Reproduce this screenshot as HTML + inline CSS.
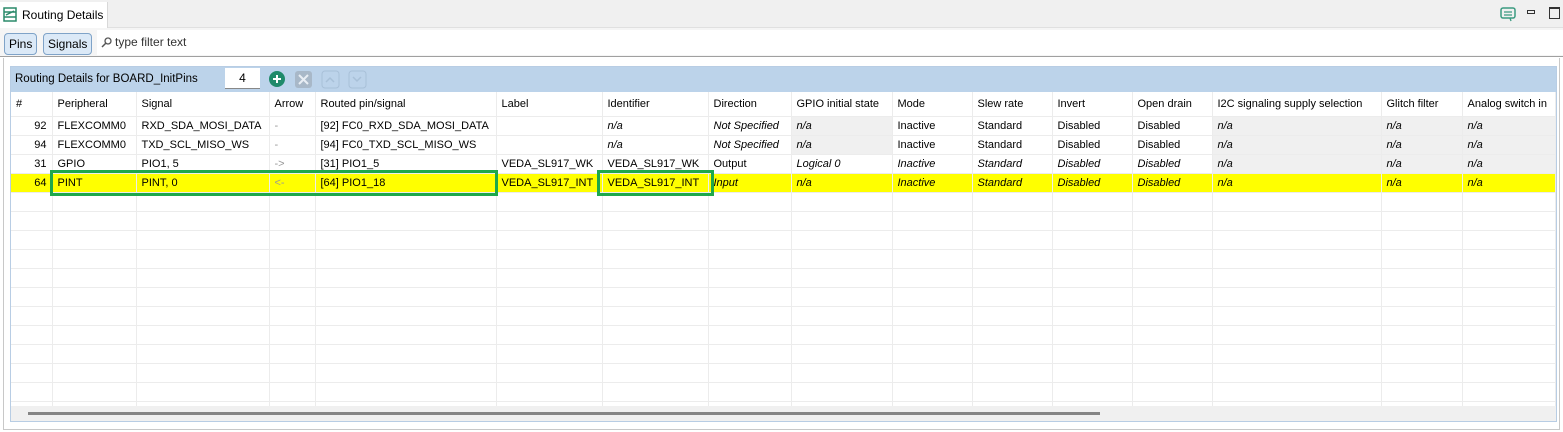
<!DOCTYPE html>
<html><head><meta charset="utf-8">
<style>
*{margin:0;padding:0;box-sizing:border-box}
body{width:1563px;height:432px;background:#fff;font-family:"Liberation Sans",sans-serif;font-size:12px;color:#000;position:relative;overflow:hidden}
.abs{position:absolute}
.tabbar{left:0;top:0;width:1563px;height:28px;background:#f0f0f0;border-bottom:1px solid #e0e0e0}
.tab{left:0;top:2px;width:108px;height:26px;background:#fff;border-right:1px solid #d8d8d8}
.toolbar{left:0;top:28px;width:1563px;height:29px;background:#f5f5f5;border-bottom:1px solid #a0a0a0}
.btn{top:33px;height:22px;background:#dbe9f7;border:1px solid #7fa3c8;border-radius:4px;padding:3px 4px;font-size:12px}
.filter{left:97px;top:30px;width:1466px;height:25px;background:#fff}
.panel{left:3px;top:58px;width:1557px;height:372px;border:1px solid #c8c8c8;border-top:none}
.inner{left:10px;top:66px;width:1547px;height:356px;border:1px solid #b8cde4}
.blue{left:11px;top:67px;width:1545px;height:25px;background:#bcd3ea}
table{position:absolute;left:11px;top:92px;border-collapse:collapse;table-layout:fixed;width:1544px}
td{height:19px;border-right:1px solid #ececec;border-bottom:1px solid #ececec;padding:1px 5px 0;white-space:nowrap;overflow:hidden;font-size:11px}
tr.h td{height:24px;border-bottom:1px solid #ececec}
.r{text-align:right}
.i{font-style:italic}
.g{background:#f0f0f0}
.y td{background:#ffff00}
.gr{color:#999}
.box{position:absolute;border:3px solid #1ea84b}
</style></head><body>
<div class="abs tabbar"></div>
<div class="abs tab"></div>
<svg class="abs" style="left:3px;top:7px" width="14" height="15" viewBox="0 0 14 15"><rect x="1" y="1" width="12" height="13" fill="none" stroke="#2a8a6a" stroke-width="1.5"/><path d="M1 5h12M1 10h12M3 8l8-4" stroke="#2a8a6a" stroke-width="1.5" fill="none"/></svg>
<div class="abs" style="left:22px;top:8px;font-size:12px">Routing Details</div>
<svg class="abs" style="left:1500px;top:7px" width="16" height="15"><rect x="1" y="1" width="14" height="10" rx="2" fill="none" stroke="#3a9a80" stroke-width="1.5"/><path d="M4 5h8M4 8h8M10 11l1 3" stroke="#3a9a80" stroke-width="1.3"/></svg>
<div class="abs" style="left:1527px;top:10px;width:8px;height:4px;border:1px solid #333"></div>
<div class="abs" style="left:1549px;top:7px;width:11px;height:12px;border:1px solid #333;border-top:2px solid #333"></div>
<div class="abs toolbar"></div>
<div class="abs filter"></div>
<div class="abs btn" style="left:4px">Pins</div>
<div class="abs btn" style="left:43px">Signals</div>
<svg class="abs" style="left:101px;top:37px" width="11" height="11"><circle cx="7" cy="4" r="3" fill="none" stroke="#555" stroke-width="1.3"/><path d="M5 6L1 10" stroke="#555" stroke-width="1.5"/></svg>
<div class="abs" style="left:115px;top:35px;color:#333">type filter text</div>
<div class="abs panel"></div>
<div class="abs inner"></div>
<div class="abs blue"></div>
<div class="abs" style="left:15px;top:73px;font-size:11.5px">Routing Details for BOARD_InitPins</div>
<div class="abs" style="left:225px;top:68px;width:35px;height:21px;background:#fff;border-bottom:1px solid #888;text-align:center;padding-top:3px">4</div>
<svg class="abs" style="left:268px;top:70px" width="102" height="19"><circle cx="9" cy="9" r="8" fill="#1f8a6a"/><path d="M9 5v8M5 9h8" stroke="#fff" stroke-width="2"/><rect x="27" y="1" width="17" height="17" rx="3" fill="#a8b8c8"/><path d="M31 5l9 9M40 5l-9 9" stroke="#e8eef4" stroke-width="2"/><rect x="54" y="1" width="17" height="17" rx="3" fill="none" stroke="#a8c0d8"/><path d="M58 12l4-4 4 4" stroke="#a8c0d8" stroke-width="1.5" fill="none"/><rect x="81" y="1" width="17" height="17" rx="3" fill="none" stroke="#a8c0d8"/><path d="M85 7l4 4 4-4" stroke="#a8c0d8" stroke-width="1.5" fill="none"/></svg>
<table>
<colgroup><col style="width:41px"><col style="width:84px"><col style="width:133px"><col style="width:46px"><col style="width:181px"><col style="width:106px"><col style="width:106px"><col style="width:83px"><col style="width:101px"><col style="width:80px"><col style="width:80px"><col style="width:80px"><col style="width:80px"><col style="width:169px"><col style="width:81px"><col style="width:93px"></colgroup>
<tr class="h"><td>#</td><td>Peripheral</td><td>Signal</td><td>Arrow</td><td>Routed pin/signal</td><td>Label</td><td>Identifier</td><td>Direction</td><td>GPIO initial state</td><td>Mode</td><td>Slew rate</td><td>Invert</td><td>Open drain</td><td>I2C signaling supply selection</td><td>Glitch filter</td><td>Analog switch in</td></tr>
<tr><td class="r">92</td><td>FLEXCOMM0</td><td>RXD_SDA_MOSI_DATA</td><td class="gr">-</td><td>[92] FC0_RXD_SDA_MOSI_DATA</td><td></td><td class="i">n/a</td><td class="i">Not Specified</td><td class="i g">n/a</td><td>Inactive</td><td>Standard</td><td>Disabled</td><td>Disabled</td><td class="i g">n/a</td><td class="i g">n/a</td><td class="i g">n/a</td></tr>
<tr><td class="r">94</td><td>FLEXCOMM0</td><td>TXD_SCL_MISO_WS</td><td class="gr">-</td><td>[94] FC0_TXD_SCL_MISO_WS</td><td></td><td class="i">n/a</td><td class="i">Not Specified</td><td class="i g">n/a</td><td>Inactive</td><td>Standard</td><td>Disabled</td><td>Disabled</td><td class="i g">n/a</td><td class="i g">n/a</td><td class="i g">n/a</td></tr>
<tr><td class="r">31</td><td>GPIO</td><td>PIO1, 5</td><td class="gr">-&gt;</td><td>[31] PIO1_5</td><td>VEDA_SL917_WK</td><td>VEDA_SL917_WK</td><td>Output</td><td class="i">Logical 0</td><td class="i">Inactive</td><td class="i">Standard</td><td class="i">Disabled</td><td class="i">Disabled</td><td class="i g">n/a</td><td class="i g">n/a</td><td class="i g">n/a</td></tr>
<tr class="y"><td class="r">64</td><td>PINT</td><td>PINT, 0</td><td class="gr">&lt;-</td><td>[64] PIO1_18</td><td>VEDA_SL917_INT</td><td>VEDA_SL917_INT</td><td class="i">Input</td><td class="i">n/a</td><td class="i">Inactive</td><td class="i">Standard</td><td class="i">Disabled</td><td class="i">Disabled</td><td class="i">n/a</td><td class="i">n/a</td><td class="i">n/a</td></tr>
<tr><td></td><td></td><td></td><td></td><td></td><td></td><td></td><td></td><td></td><td></td><td></td><td></td><td></td><td></td><td></td><td></td></tr>
<tr><td></td><td></td><td></td><td></td><td></td><td></td><td></td><td></td><td></td><td></td><td></td><td></td><td></td><td></td><td></td><td></td></tr>
<tr><td></td><td></td><td></td><td></td><td></td><td></td><td></td><td></td><td></td><td></td><td></td><td></td><td></td><td></td><td></td><td></td></tr>
<tr><td></td><td></td><td></td><td></td><td></td><td></td><td></td><td></td><td></td><td></td><td></td><td></td><td></td><td></td><td></td><td></td></tr>
<tr><td></td><td></td><td></td><td></td><td></td><td></td><td></td><td></td><td></td><td></td><td></td><td></td><td></td><td></td><td></td><td></td></tr>
<tr><td></td><td></td><td></td><td></td><td></td><td></td><td></td><td></td><td></td><td></td><td></td><td></td><td></td><td></td><td></td><td></td></tr>
<tr><td></td><td></td><td></td><td></td><td></td><td></td><td></td><td></td><td></td><td></td><td></td><td></td><td></td><td></td><td></td><td></td></tr>
<tr><td></td><td></td><td></td><td></td><td></td><td></td><td></td><td></td><td></td><td></td><td></td><td></td><td></td><td></td><td></td><td></td></tr>
<tr><td></td><td></td><td></td><td></td><td></td><td></td><td></td><td></td><td></td><td></td><td></td><td></td><td></td><td></td><td></td><td></td></tr>
<tr><td></td><td></td><td></td><td></td><td></td><td></td><td></td><td></td><td></td><td></td><td></td><td></td><td></td><td></td><td></td><td></td></tr>
<tr><td></td><td></td><td></td><td></td><td></td><td></td><td></td><td></td><td></td><td></td><td></td><td></td><td></td><td></td><td></td><td></td></tr>
<tr><td></td><td></td><td></td><td></td><td></td><td></td><td></td><td></td><td></td><td></td><td></td><td></td><td></td><td></td><td></td><td></td></tr>
</table>
<div class="abs" style="left:11px;top:406px;width:1545px;height:15px;background:#f0f0f0"></div>
<div class="abs" style="left:28px;top:412px;width:1072px;height:3px;background:#858585"></div>
<div class="box" style="left:50px;top:170px;width:448px;height:26px"></div>
<div class="box" style="left:597px;top:170px;width:117px;height:26px"></div>
</body></html>
